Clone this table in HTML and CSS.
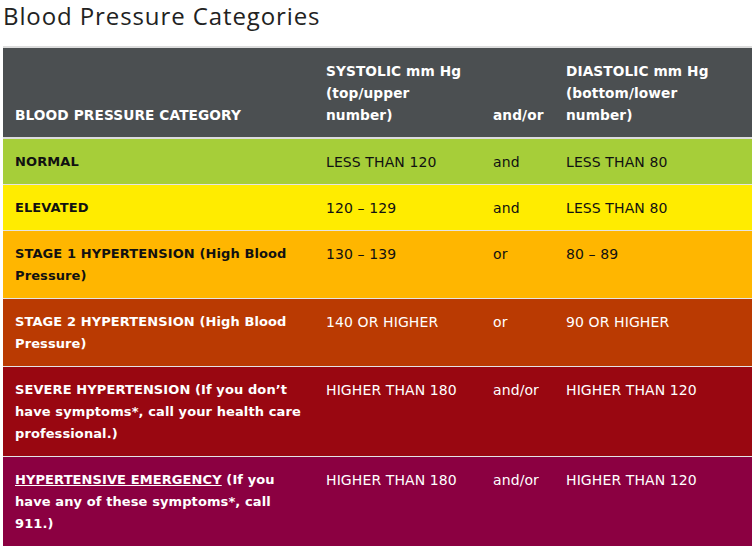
FILE: index.html
```html
<!DOCTYPE html>
<html lang="en">
<head>
<meta charset="utf-8">
<title>Blood Pressure Categories</title>
<link rel="stylesheet" href="styles.css">
</head>
<body>
<h2 class="title">Blood Pressure Categories</h2>
<table class="bp-table">
  <colgroup>
    <col class="c-cat"><col class="c-sys"><col class="c-and"><col class="c-dia">
  </colgroup>
  <thead>
    <tr>
      <th>BLOOD PRESSURE CATEGORY</th>
      <th>SYSTOLIC mm Hg (top/upper number)</th>
      <th>and/or</th>
      <th>DIASTOLIC mm Hg (bottom/lower number)</th>
    </tr>
  </thead>
  <tbody>
    <tr class="normal">
      <td class="cat">NORMAL</td><td>LESS THAN 120</td><td>and</td><td>LESS THAN 80</td>
    </tr>
    <tr class="elevated">
      <td class="cat">ELEVATED</td><td>120 – 129</td><td>and</td><td>LESS THAN 80</td>
    </tr>
    <tr class="stage1">
      <td class="cat">STAGE 1 HYPERTENSION (High Blood Pressure)</td><td>130 – 139</td><td>or</td><td>80 – 89</td>
    </tr>
    <tr class="stage2">
      <td class="cat">STAGE 2 HYPERTENSION (High Blood Pressure)</td><td>140 OR HIGHER</td><td>or</td><td>90 OR HIGHER</td>
    </tr>
    <tr class="severe">
      <td class="cat">SEVERE HYPERTENSION (If you don’t have symptoms*, call your health care professional.)</td><td>HIGHER THAN 180</td><td>and/or</td><td>HIGHER THAN 120</td>
    </tr>
    <tr class="emergency">
      <td class="cat"><a href="#" class="link">HYPERTENSIVE EMERGENCY</a> (If you have any of these symptoms*, call 911.)</td><td>HIGHER THAN 180</td><td>and/or</td><td>HIGHER THAN 120</td>
    </tr>
  </tbody>
</table>
</body>
</html>
```
FILE: styles.css
```css
html, body {
  margin: 0;
  padding: 0;
  background: #fff;
}
body {
  padding: 0 0 0 3px;
  font-family: "DejaVu Sans", "Open Sans", sans-serif;
  color: #111;
}
.title {
  margin: 0;
  height: 46px;
  padding-top: 1px;
  box-sizing: border-box;
  font-family: "Open Sans", sans-serif;
  font-size: 24px;
  font-weight: 400;
  line-height: 30px;
  letter-spacing: 0.9px;
  color: #222;
}
.bp-table {
  width: 749px;
  border-collapse: collapse;
  table-layout: fixed;
  border-top: 2px solid #dcdcdc;
  font-size: 14px;
  line-height: 22px;
  letter-spacing: 0.1px;
}
.c-cat { width: 311px; }
.c-sys { width: 167px; }
.c-and { width: 73px; }
.c-dia { width: 198px; }
.bp-table th {
  background: #4b4f51;
  color: #fff;
  font-size: 13.7px;
  font-weight: 700;
  text-align: left;
  vertical-align: bottom;
  padding: 12px 12px 11px;
  border-bottom: 2px solid #dcdcdc;
}
.bp-table td {
  vertical-align: top;
  padding: 12px 12px 11px;
  border-top: 1px solid #e4e4e4;
  font-weight: 400;
}
.bp-table td.cat {
  font-size: 13px;
  font-weight: 700;
}
.normal { background: #a6ce39; color: #111; }
.elevated { background: #ffec00; color: #111; }
.stage1 { background: #ffb600; color: #111; }
.stage2 { background: #ba3a02; color: #fff; }
.severe { background: #990711; color: #fff; }
.emergency { background: #8b0041; color: #fff; }
.link {
  color: #fff;
  text-decoration: underline;
}
```
